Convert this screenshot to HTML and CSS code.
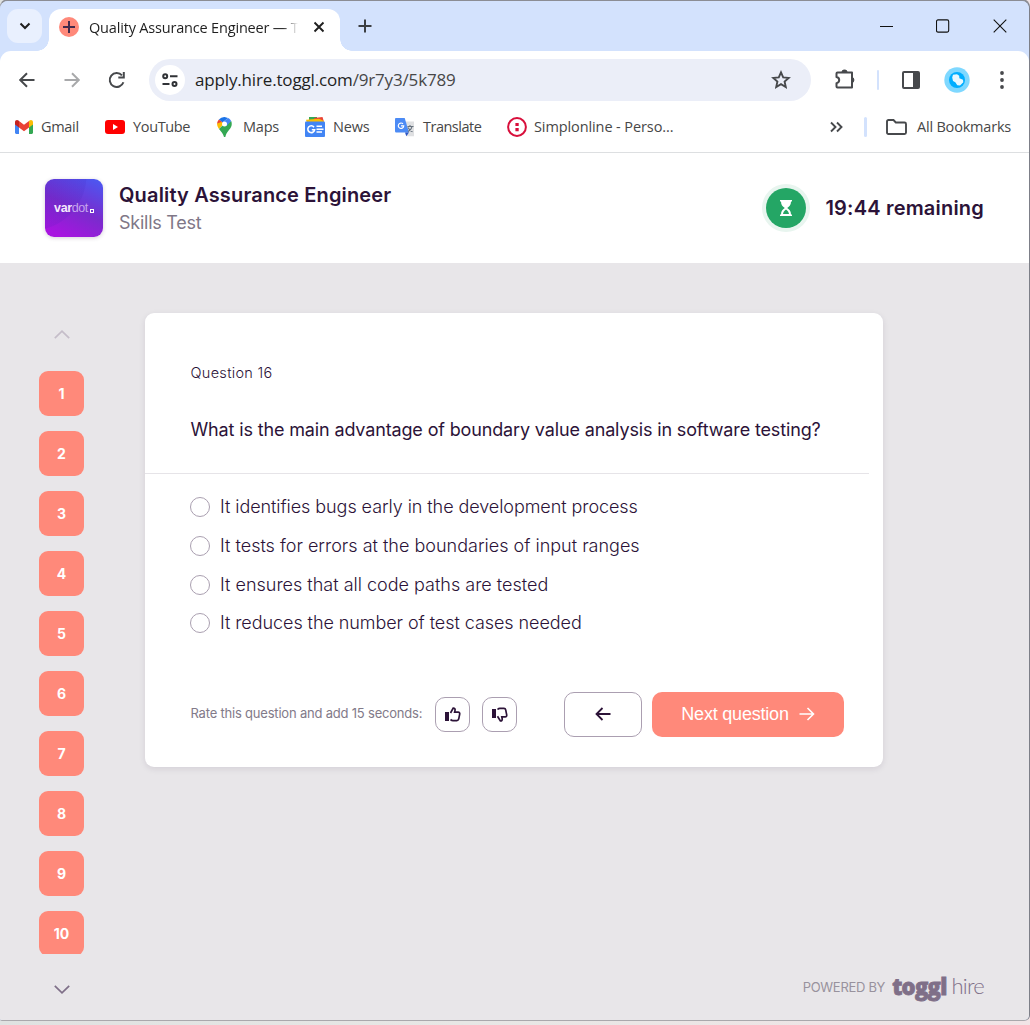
FILE: index.html
```html
<!DOCTYPE html>
<html lang="en">
<head>
<meta charset="utf-8">
<title>Quality Assurance Engineer — Toggl Hire</title>
<link rel="stylesheet" href="styles.css">
</head>
<body>
<div class="window">
  <div class="tabstrip">
    <div class="tab-search"><svg width="12" height="8" viewBox="0 0 12 8"><path d="M1.5 1.5 6 6l4.500-4.500" fill="none" stroke="#1f1f1f" stroke-width="2"/></svg></div>
    <div class="tab">
      <svg class="favicon" width="20" height="20" viewBox="0 0 20 20"><circle cx="10" cy="10" r="10" fill="#ff897a"/><path d="M10 4v12M4 10h12" stroke="#412a4c" stroke-width="2"/></svg>
      <span class="tab-title">Quality Assurance Engineer — T</span>
      <svg width="12" height="12" viewBox="0 0 12 12"><path d="M1.500 1.500l9 9M10.500 1.500l-9 9" stroke="#1f1f1f" stroke-width="1.900"/></svg>
    </div>
    <div class="new-tab"><svg width="14" height="14" viewBox="0 0 14 14"><path d="M7 .5v13M.5 7h13" stroke="#3c3f43" stroke-width="2"/></svg></div>
    <div class="controls">
      <svg width="14" height="14" viewBox="0 0 14 14"><path d="M1 7.500h13" stroke="#111"/></svg>
      <svg width="14" height="14" viewBox="0 0 14 14"><rect x=".5" y=".9" width="12.200" height="12.200" rx="1.500" fill="none" stroke="#111" stroke-width="1.100"/></svg>
      <svg width="14" height="14" viewBox="0 0 14 14"><path d="M.7.700l12.600 12.600M13.300.700.700 13.300" stroke="#111" stroke-width="1.100"/></svg>
    </div>
  </div>

  <div class="toolbar">
    <div class="nav-icons">
      <svg width="18" height="18" viewBox="0 0 18 18"><path d="M16.500 9H2.500M9 2.200 2.200 9 9 15.800" fill="none" stroke="#47494c" stroke-width="2"/></svg>
      <svg width="18" height="18" viewBox="0 0 18 18"><path d="M1.500 9h14M9 2.200 15.800 9 9 15.800" fill="none" stroke="#a8a9ab" stroke-width="2"/></svg>
      <svg width="18" height="18" viewBox="0 0 18 18"><path d="M15.400 11.200A7 7 0 1 1 14 4.300" fill="none" stroke="#47494c" stroke-width="2"/><path d="M16.800 1v6.600h-6.500V5.600h4.500V1z" fill="#47494c"/></svg>
    </div>
    <div class="omnibox">
      <span class="site-info"><svg width="16" height="14" viewBox="0 0 16 14"><g fill="none" stroke="#303236" stroke-width="2"><circle cx="3.200" cy="3.200" r="2"/><path d="M8 3.200h7.500M.5 11h7"/><circle cx="12.500" cy="11" r="2"/></g></svg></span>
      <span class="url">apply.hire.toggl.com<i>/9r7y3/5k789</i></span>
      <svg width="20" height="20" viewBox="0 0 20 20"><path d="M10 2.400l2.200 5 5.500.500-4.100 3.700 1.200 5.400L10 14.200 5.200 17l1.200-5.400-4.100-3.700 5.500-.5z" fill="none" stroke="#47494c" stroke-width="1.900"/></svg>
    </div>
    <div class="tools">
      <svg class="puzzle" width="23" height="22" viewBox="0 0 23 22"><path d="M3.500 3.500H18v15H3.500c-.7 0-1-.3-1-1v-3.300c3.600-.7 3.600-5.600 0-6.300V4.500c0-.7.300-1 1-1z" fill="none" stroke="#47494c" stroke-width="2" stroke-linejoin="round"/><path d="M7.500 3.500a3 3 0 0 1 6 0zM18 8a3.200 3.200 0 0 1 0 6.200z" fill="#47494c"/></svg>
      <span class="divider"></span>
      <svg class="panel" width="18" height="18" viewBox="0 0 18 18"><rect x="1" y="1" width="16" height="16" rx="1" fill="none" stroke="#47494c" stroke-width="2"/><path d="M11 1h6v16h-6z" fill="#47494c"/></svg>
      <svg class="avatar" width="26" height="26" viewBox="0 0 26 26"><circle cx="13" cy="13" r="12.700" fill="#7fd8ff"/><circle cx="13" cy="13" r="8" fill="#00aeff"/><path d="M9 7.800l4-.6 2.200 1.600.2 2.400 3.600 1.600.3 2.400-3.300 3.300-2.700-.3-2-3-2.300-1.200-.8-3.600z" fill="#e8f8ff"/></svg>
      <svg class="dots" width="4" height="20" viewBox="0 0 4 20"><g fill="#47494c"><circle cx="2" cy="3" r="1.900"/><circle cx="2" cy="10" r="1.900"/><circle cx="2" cy="17" r="1.900"/></g></svg>
    </div>
  </div>

  <div class="bookmarks">
    <div class="bm"><svg width="18" height="14" viewBox="0 0 18 14"><path d="M0 2v10.500C0 13.300.7 14 1.500 14H4V5z" fill="#4285f4"/><path d="M14 5v9h2.500c.8 0 1.500-.7 1.500-1.500V2z" fill="#34a853"/><path d="M4 1v6.500l5 3.700 5-3.700V1L9 4.800z" fill="#ea4335"/><path d="M0 2.200C0 .3 2-.6 3.500.6L4 1v6.500L0 4.500z" fill="#c5221f"/><path d="M18 2.200C18 .3 16-.6 14.500.6L14 1v6.500l4-3z" fill="#fbbc04"/></svg><span>Gmail</span></div>
    <div class="bm"><svg width="20" height="14" viewBox="0 0 20 14"><rect width="20" height="14" rx="3" fill="#f00"/><path d="M8 4l5 3-5 3z" fill="#fff"/></svg><span>YouTube</span></div>
    <div class="bm"><svg width="15" height="20" viewBox="0 0 15 20"><path d="M7.500 0A7.300 7.300 0 0 0 1.900 2.500L5.500 5.500 11 1z" fill="#1a73e8"/><path d="M1.900 2.500C.8 3.700.2 5 .1 6.500L3 9l3-3.300z" fill="#ea4335"/><path d="M.1 6.500C0 8.500.6 10 2 12l4.500-5L4.500 5z" fill="#fbbc04"/><path d="M2 12l3.500-3.500 8.700-4.500c1.500 4-.2 6.500-2.200 9-2 2.300-3 4-3.700 7H7c-.8-3.500-2.800-5-5-8z" fill="#34a853"/><path d="M11 .9c1.500.7 2.500 1.700 3.200 3.200L9.500 9 5.500 5.500z" fill="#4285f4"/><circle cx="7.500" cy="7" r="2.500" fill="#fff"/></svg><span>Maps</span></div>
    <div class="bm"><svg width="20" height="20" viewBox="0 0 20 20"><path d="M4 0h8v5H4z" fill="#34a853"/><path d="M9 1l8.500-1L19 5h-9z" fill="#ea4335"/><path d="M1 2.800l13-1L19 4v2H2z" fill="#fbbc04"/><rect y="4.500" width="20" height="15.500" rx="1" fill="#4285f4"/><path d="M9 10.200a3.400 3.400 0 1 0 .6 2.600H6.800" fill="none" stroke="#fff" stroke-width="1.600"/><path d="M11.500 9.300h5.500M11.500 12.200h7M11.500 15.100h5.500" stroke="#fff" stroke-width="1.500"/></svg><span>News</span></div>
    <div class="bm"><svg width="20" height="20" viewBox="0 0 20 20"><path d="M8 4.500h11v14.700h-7z" fill="#dfe0e2"/><path d="M1.200 1h8.500l4.300 14.500H1.500C.7 15.500 0 15 0 14V2.200C0 1.500.5 1 1.200 1z" fill="#4c8bf5"/><path d="M10 15.500h4l-2.700 3.800z" fill="#2d57c4"/><path d="M8 6.900a2.700 2.700 0 1 0 .7 2H6" fill="none" stroke="#fff" stroke-width="1.200"/><path d="M12.500 9.500h6M15 8v1.500M17 9.500c-.5 2.500-1.500 4-4 5M13 10.500c1 2 2.500 3.500 4.500 4.200" fill="none" stroke="#66717d" stroke-width="1.100"/></svg><span>Translate</span></div>
    <div class="bm"><svg width="20" height="20" viewBox="0 0 20 20"><circle cx="10" cy="10" r="8.900" fill="#fff" stroke="#d80f3b" stroke-width="2"/><path d="M8.400 5.900h3.300v3.200H8.400zM8.400 11h3.300v3.200H8.400z" fill="#d80f3b"/></svg><span>Simplonline - Perso...</span></div>
    <svg class="more" width="13" height="12" viewBox="0 0 13 12"><path d="M1 1.500 5.500 6 1 10.500M7 1.500 11.500 6 7 10.500" fill="none" stroke="#47494c" stroke-width="1.900"/></svg>
    <span class="divider"></span>
    <div class="bm all"><svg width="21" height="16" viewBox="0 0 21 16"><path d="M1 2.500C1 1.500 1.500 1 2.500 1h5l2.300 2.500h8.700c1 0 1.500.500 1.500 1.500v8.500c0 1-.5 1.500-1.500 1.500h-16C1.500 15 1 14.500 1 13.500z" fill="none" stroke="#47494c" stroke-width="1.900"/></svg><span>All Bookmarks</span></div>
  </div>

  <header class="header">
    <div class="logo"><b>var</b>dot<i></i></div>
    <div class="titles">
      <h1>Quality Assurance Engineer</h1>
      <p>Skills Test</p>
    </div>
    <div class="timer">
      <span class="timer-icon"><svg width="12" height="16" viewBox="0 0 12 16"><path d="M0 0h12v1.500h-1C11 5 9.500 6.500 7.200 8 9.500 9.500 11 11 11 14.500h1V16H0v-1.500h1C1 11 2.500 9.500 4.800 8 2.500 6.500 1 5 1 1.500H0z" fill="#fff"/><path d="M3 14c.3-2 1.200-3.300 3-4.600 1.800 1.300 2.700 2.600 3 4.600z" fill="#24a665"/></svg></span>
      <span class="timer-text">19:44 remaining</span>
    </div>
  </header>

  <main class="content">
    <nav class="questions">
      <svg width="16" height="9" viewBox="0 0 16 9"><path d="M.8 8.200 8 1.200l7.200 7" fill="none" stroke="#c5bdc9" stroke-width="1.700"/></svg>
      <div class="question-list">
        <a>1</a><a>2</a><a>3</a><a>4</a><a>5</a><a>6</a><a>7</a><a>8</a><a>9</a><a>10</a>
      </div>
      <svg width="16" height="9" viewBox="0 0 16 9"><path d="M.8.800 8 7.800l7.200-7" fill="none" stroke="#7f6f88" stroke-width="1.700"/></svg>
    </nav>
    <section class="card">
      <div class="question">
        <p class="number">Question 16</p>
        <h2>What is the main advantage of boundary value analysis in software testing?</h2>
      </div>
      <div class="answers">
        <label><span class="radio"></span><span class="tight">It identifies bugs early in the development process</span></label>
        <label><span class="radio"></span><span>It tests for errors at the boundaries of input ranges</span></label>
        <label><span class="radio"></span><span>It ensures that all code paths are tested</span></label>
        <label><span class="radio"></span><span class="tight">It reduces the number of test cases needed</span></label>
      </div>
      <div class="actions">
        <span class="rate">Rate this question and add 15 seconds:</span>
        <button class="vote"><svg width="16" height="15" viewBox="0 0 16 15"><path d="M0 5h4v9H0z" fill="#2c1338"/><path d="M5.500 6 8.200 1c1.500 0 2.200 1 1.800 2.400L9.600 5.200h3.600c1.200 0 1.700.900 1.500 1.900l-1 5c-.3 1-.8 1.500-1.800 1.500H8c-1 0-1.700-.4-2.500-1.100" fill="none" stroke="#2c1338" stroke-width="1.700"/></svg></button>
        <button class="vote"><svg width="16" height="15" viewBox="0 0 16 15"><path d="M0 2h4v9H0z" fill="#2c1338"/><path d="M5.500 2.500C6.200 1.800 7 1.400 8 1.400h4c1 0 1.500.5 1.700 1.500l1 5c.2 1-.3 1.900-1.500 1.900H9.800l.4 1.900c.3 1.400-.4 2.300-1.800 2.300L5.500 9.200" fill="none" stroke="#2c1338" stroke-width="1.700"/></svg></button>
        <button class="back"><svg width="16" height="14" viewBox="0 0 16 14"><path d="M15.500 7H1.500M7.500 1l-6 6 6 6" fill="none" stroke="#2c1338" stroke-width="1.800"/></svg></button>
        <button class="next"><span>Next question</span><svg width="16" height="14" viewBox="0 0 16 14"><path d="M.5 7h14M8.500 1l6 6-6 6" fill="none" stroke="#fff" stroke-width="1.600"/></svg></button>
      </div>
    </section>
    <footer class="powered"><span class="by">POWERED BY</span><b>toggl</b><span class="hire">hire</span></footer>
  </main>
</div>
</body>
</html>
```
FILE: styles.css
```css
* { box-sizing: border-box; }
html, body { margin: 0; height: 100%; }
body {
  padding-top: 1px;
  background: linear-gradient(90deg, #dfe2e1, #e7e7e5 45%, #f1e4e6);
  font-family: Inter, "Liberation Sans", sans-serif;
  color: #2c1338;
  overflow: hidden;
}
svg { display: block; flex: none; }
h1, h2, p { margin: 0; }
span, h1, h2 { white-space: nowrap; }

.window {
  width: 1030px;
  height: 1020px;
  display: flex;
  flex-direction: column;
  border-right: 1px solid #7d7f88;
  border-bottom: 1px solid #aaa8ac;
  border-radius: 8px 8px 6px 2px;
  background: #d3e2fd;
  overflow: hidden;
  box-shadow: 0 -2px 0 #8b8d94;
}

/* Browser frame */
.tabstrip { height: 50px; flex: none; display: flex; align-items: flex-start; background: #d3e2fd; }
.tab-search {
  width: 35px; height: 34px; margin: 8px 0 0 7px; border-radius: 11px; background: #e9f0fe;
  display: flex; align-items: center; justify-content: center;
}
.tab {
  position: relative;
  width: 291px; height: 43px; margin: 8px 0 0 7px; padding: 0 15px 8px 10px; border-radius: 12px 12px 0 0;
  background: #fff; display: flex; align-items: center;
}
.tab::before, .tab::after {
  content: ""; position: absolute; bottom: 1px; width: 12px; height: 12px;
}
.tab::before { left: -12px; background: radial-gradient(circle at 0 0, transparent 11.500px, #fff 12px); }
.tab::after { right: -12px; background: radial-gradient(circle at 100% 0, transparent 11.500px, #fff 12px); }
.tab-title {
  width: 209px; margin: 3px auto 0 10px; overflow: hidden;
  font: 14.500px/20px "Open Sans", sans-serif; letter-spacing: -.18px; color: #1f1f1f;
  -webkit-mask-image: linear-gradient(90deg, #000 194px, transparent 209px);
  mask-image: linear-gradient(90deg, #000 194px, transparent 209px);
}
.new-tab { margin: 18px 0 0 18px; }
.controls { margin: 18px 22px 0 auto; display: flex; gap: 43px; }

.toolbar {
  height: 57px; flex: none; display: flex; align-items: center; background: #fff; border-radius: 11px 11px 0 0;
}
.nav-icons { width: 149px; padding-left: 18px; display: flex; gap: 27px; }
.omnibox {
  width: 662px; height: 42px; padding: 0 20px 0 6px; border-radius: 21px; background: #ebeef8;
  display: flex; align-items: center;
}
.site-info {
  width: 30px; height: 30px; border-radius: 50%; background: #fff;
  display: flex; align-items: center; justify-content: center;
}
.url { margin: 1px auto 0 10px; font: 17px/24px "Open Sans", sans-serif; letter-spacing: -.16px; color: #1f1f1f; }
.url i { font-style: normal; color: #474747; }
.tools { flex: 1; display: flex; align-items: center; }
.puzzle { margin-left: 23px; }
.divider { width: 2px; height: 20px; border-radius: 2px; background: #d3e2fd; }
.tools .divider { margin-left: 20px; }
.panel { margin-left: 23px; }
.avatar { margin-left: 24px; }
.dots { margin-left: 30px; }

.bookmarks {
  height: 45px; flex: none; padding: 0 18px 7px 15px; display: flex; align-items: center;
  background: #fff; border-bottom: 1px solid #dddfe1;
  font: 14.500px/20px "Open Sans", sans-serif; color: #474747;
}
.bm { display: flex; align-items: center; gap: 8px; letter-spacing: -.2px; }
.bm:nth-child(1) { width: 90px; gap: 8px; letter-spacing: -.3px; }
.bm:nth-child(2) { width: 112px; letter-spacing: -.35px; }
.bm:nth-child(3) { width: 88px; gap: 11px; }
.bm:nth-child(4) { width: 90px; }
.bm:nth-child(5) { width: 112px; letter-spacing: -.5px; }
.bm:nth-child(6) { gap: 7px; letter-spacing: -.1px; }
.more { margin-left: auto; }
.bookmarks .divider { width: 3px; margin-left: 21px; }
.bm.all { margin-left: 19px; width: 125px; gap: 10px; }

/* Test header */
.header { height: 110px; flex: none; padding: 0 45px; display: flex; align-items: center; background: #fff; }
.logo {
  width: 58px; height: 58px; border-radius: 9px; display: flex; align-items: center; justify-content: center;
  background:
    radial-gradient(circle at -14px -4px, rgba(60, 30, 180, .12) 55px, transparent 56px),
    linear-gradient(25deg, #a814e0 10%, #7a2bcd 50%, #4d56f0 95%);
  box-shadow: 0 1px 4px rgba(44, 19, 56, .2);
  font: 12.500px/14px "Liberation Sans", sans-serif; letter-spacing: -.4px; color: #c6a5ee;
}
.logo b { color: #f3e8fc; }
.logo i { width: 4px; height: 4px; margin: 5px 0 0 2px; border: 1px solid #fff; }
.titles { margin: 2px 0 0 16px; }
h1 { font-size: 20px; line-height: 28px; font-weight: 600; letter-spacing: .15px; }
.titles p { font-size: 18px; line-height: 28px; letter-spacing: -.25px; color: #7f7787; }
.timer { margin-left: auto; display: flex; align-items: center; gap: 19px; }
.timer-icon {
  width: 40px; height: 40px; border-radius: 50%; background: #24a665; box-shadow: 0 0 0 4px #e8f5ef;
  display: flex; align-items: center; justify-content: center;
}
.timer-text { font-size: 20px; line-height: 28px; font-weight: 600; letter-spacing: .2px; }

/* Question area */
.content {
  flex: 1; min-height: 0; padding: 50px 45px 19px 39px; background: #e8e6e9;
  display: grid; grid-template-columns: 45px 738px 1fr; grid-template-rows: 1fr 28px; column-gap: 61px;
}
.questions {
  grid-row: 1 / 3; padding-top: 17px; display: flex; flex-direction: column; align-items: center;
}
.question-list {
  height: 583px; flex: none; margin: 32px 0 31px; display: flex; flex-direction: column; gap: 15px; overflow: hidden;
}
.question-list a {
  width: 45px; height: 45px; flex: none; border-radius: 9px; background: #ff897a; color: #fff;
  font-size: 14px; line-height: 45px; font-weight: 700; text-align: center;
}
.card {
  height: 454px; border-radius: 9px; background: #fff; box-shadow: 0 2px 6px rgba(44, 19, 56, .1);
}
.question { height: 161px; width: 724px; padding: 49px 0 0 45.500px; border-bottom: 1px solid #e6e4e8; }
.number { font-size: 14.500px; line-height: 22px; font-weight: 350; letter-spacing: .3px; }
h2 { margin-top: 33px; font-size: 18px; line-height: 26px; font-weight: 400; letter-spacing: -.145px; }
.answers { padding: 14px 0 0 45px; display: flex; flex-direction: column; }
.answers label {
  height: 38.700px; display: flex; align-items: center; gap: 10px;
  font-size: 18px; line-height: 38px; font-weight: 300;
}
.answers .tight { letter-spacing: -.07px; }
.radio { width: 20px; height: 20px; border: 1px solid #aa9fb0; border-radius: 50%; }
.actions { margin-top: 49px; padding-left: 45.500px; display: flex; align-items: center; }
.rate { width: 244.500px; padding-bottom: 2px; font-size: 13px; letter-spacing: -.2px; color: #827a89; }
button {
  padding: 0; border: 1px solid #ab9fb1; border-radius: 10px; background: #fff;
  display: flex; align-items: center; justify-content: center;
}
.vote { width: 35px; height: 35px; margin-right: 12px; }
.back { width: 78px; height: 45px; margin-left: 35px; }
.next {
  width: 192px; height: 45px; margin-left: 10px; border: 0; gap: 10px; background: #ff897a; color: #fff;
  font: 18px/24px "Liberation Sans", Arial, sans-serif; letter-spacing: -.2px;
}
.powered {
  grid-column: 2 / 4; display: flex; align-items: center; justify-content: flex-end; color: #7f6f88;
}
.by { font-size: 13px; letter-spacing: -.3px; color: #98929d; }
.powered b { margin: -3px 0 0 7px; font: 800 22px/28px "Open Sans", sans-serif; letter-spacing: -.7px; -webkit-text-stroke: .8px #7f6f88; }
.hire { margin: -2px 0 0 5px; font: 300 22px/28px Lato, sans-serif; letter-spacing: -.8px; }
```
